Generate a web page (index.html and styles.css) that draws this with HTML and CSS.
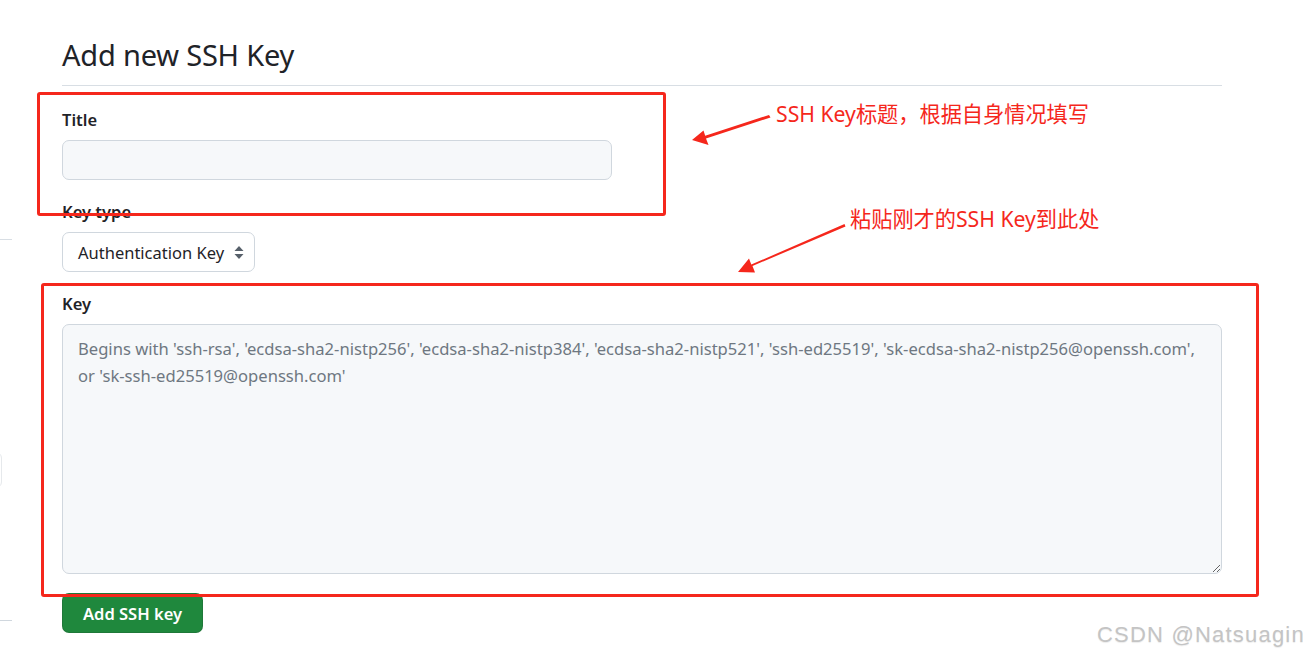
FILE: index.html
```html
<!DOCTYPE html>
<html lang="en">
<head>
<meta charset="utf-8">
<title>Add new SSH Key</title>
<link rel="stylesheet" href="styles.css">
</head>
<body>
<div class="page">
  <aside class="side">
    <div class="side-line side-line-1"></div>
    <div class="side-box"></div>
    <div class="side-line side-line-2"></div>
  </aside>
  <main class="content">
    <h2 class="heading">Add new SSH Key</h2>
    <form class="form">
      <div class="group group-first">
        <label class="label" for="title">Title</label>
        <input class="input" id="title" type="text">
      </div>
      <div class="group">
        <label class="label">Key type</label>
        <div class="select">
          <span>Authentication Key</span>
          <svg class="select-arrows" width="12" height="16" viewBox="0 0 12 16"><path d="M6 2 L10.5 7 H1.5 Z" fill="#57606a"/><path d="M6 15 L10.5 10 H1.5 Z" fill="#57606a"/></svg>
        </div>
      </div>
      <div class="group">
        <label class="label" for="key">Key</label>
        <textarea class="textarea" id="key" placeholder="Begins with 'ssh-rsa', 'ecdsa-sha2-nistp256', 'ecdsa-sha2-nistp384', 'ecdsa-sha2-nistp521', 'ssh-ed25519', 'sk-ecdsa-sha2-nistp256@openssh.com', or 'sk-ssh-ed25519@openssh.com'"></textarea>
      </div>
      <div class="group">
        <button class="btn" type="button">Add SSH key</button>
      </div>
    </form>
  </main>
</div>

<div class="anno-box anno-box-1"></div>
<div class="anno-box anno-box-2"></div>
<svg class="anno-arrows" width="1308" height="659" viewBox="0 0 1308 659">
  <path d="M769 115 L770.5 117.5 L706 138.5 L708.5 145 L692 140 L703.5 130.5 L705.2 135.7 Z" fill="#f5271c"/>
  <path d="M844.5 224 L845.5 226.5 L752.5 266 L755 272.5 L738 272 L749 258.5 L751.3 264.6 Z" fill="#f5271c"/>
</svg>
<div class="anno-text anno-text-1">SSH Key标题，根据自身情况填写</div>
<div class="anno-text anno-text-2">粘贴刚才的SSH Key到此处</div>
<div class="watermark">CSDN @Natsuagin</div>
</body>
</html>
```

FILE: styles.css
```css
* { box-sizing: border-box; }
html, body { margin: 0; padding: 0; background: #ffffff; }
body {
  width: 1308px;
  height: 659px;
  overflow: hidden;
  position: relative;
  font-family: "Noto Sans", "Open Sans", sans-serif;
  color: #1f2328;
}
.page { display: flex; gap: 50px; }
.side { width: 12px; flex: none; position: relative; height: 659px; }
.side-line { height: 1px; background: #d8dee4; width: 12px; }
.side-line-1 { margin-top: 239px; }
.side-box {
  margin-top: 212px;
  margin-left: -10px;
  width: 12px;
  height: 36px;
  border: 1px solid #e6e9ec;
  border-radius: 6px;
}
.side-line-2 { margin-top: 132px; background: #d0d7de; }
.content { width: 1160px; flex: none; }
.heading {
  margin: 0;
  padding-top: 35px;
  padding-bottom: 10px;
  font-size: 29px;
  font-weight: 400;
  line-height: 40px;
  border-bottom: 1px solid #d8dee4;
  letter-spacing: -0.2px;
}
.form { display: flex; flex-direction: column; }
.group { display: flex; flex-direction: column; align-items: flex-start; margin-top: 19px; }
.group-first { margin-top: 21px; }
.label {
  font-size: 16.5px;
  font-weight: 600;
  line-height: 26px;
  margin-bottom: 7px;
}
.input {
  width: 550px;
  height: 40px;
  background: #f6f8fa;
  border: 1px solid #d0d7de;
  border-radius: 7px;
  font: inherit;
}
.select {
  height: 40px;
  display: flex;
  align-items: center;
  gap: 9px;
  padding: 0 9px 0 15px;
  border: 1px solid #d0d7de;
  border-radius: 7px;
  background: #ffffff;
  font-size: 16.5px;
  color: #1f2328;
}
.select-arrows { display: block; }
.textarea {
  display: block;
  width: 1160px;
  height: 250px;
  background: #f6f8fa;
  border: 1px solid #d0d7de;
  border-radius: 7px;
  padding: 10px 15px;
  font-family: inherit;
  font-size: 16.6px;
  line-height: 27px;
  resize: vertical;
}
.textarea::placeholder { color: #6e7781; opacity: 1; }
.btn {
  height: 40px;
  padding: 0 20px;
  background: #1f883d;
  color: #ffffff;
  border: 1px solid rgba(31, 35, 40, 0.15);
  border-radius: 7px;
  font-family: inherit;
  font-size: 16.5px;
  font-weight: 600;
}
.anno-box {
  position: absolute;
  border: 3px solid #f5271c;
  border-radius: 3px;
}
.anno-box-1 { left: 37px; top: 92px; width: 629px; height: 124px; }
.anno-box-2 { left: 41px; top: 283px; width: 1218px; height: 314px; }
.anno-arrows { position: absolute; left: 0; top: 0; pointer-events: none; }
.anno-text {
  position: absolute;
  color: #f5271c;
  font-family: "Noto Sans", "Noto Sans CJK SC", sans-serif;
  font-size: 21.2px;
  line-height: 28px;
  white-space: nowrap;
}
.anno-text-1 { left: 776px; top: 100px; }
.anno-text-2 { left: 850px; top: 205px; }
.watermark {
  position: absolute;
  left: 1097px;
  top: 622px;
  font-family: "Liberation Sans", sans-serif;
  font-size: 22px;
  letter-spacing: 1.2px;
  color: #c4c4c4;
  text-shadow: 0 1px 1px rgba(0,0,0,0.08);
  white-space: nowrap;
}
```
